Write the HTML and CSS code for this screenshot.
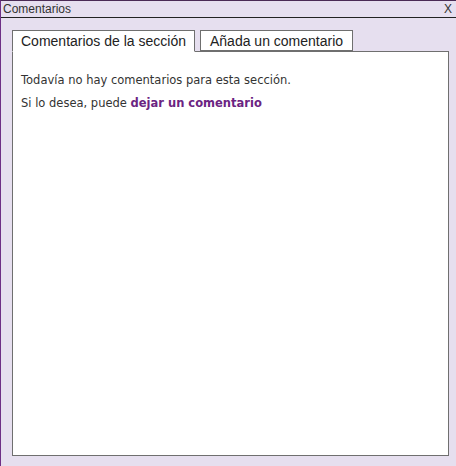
FILE: index.html
```html
<!DOCTYPE html>
<html>
<head>
	<title>Comentarios</title>
	<meta charset="utf-8">
	<link rel="stylesheet" href="styles.css">
</head>
<body>
	<div class="window">
		<div class="titlebar">
			<span class="title">Comentarios</span>
			<span class="close">X</span>
		</div>
		<div class="content">
			<div class="tabs">
				<div class="tab active">Comentarios de la sección</div>
				<div class="tab">Añada un comentario</div>
			</div>
			<div class="panel">
				<p>Todavía no hay comentarios para esta sección.</p>
				<p>Si lo desea, puede <a href="#">dejar un comentario</a></p>
			</div>
		</div>
	</div>
</body>
</html>
```

FILE: styles.css
```css
body{
	margin: 0;
}

.window{
	width: 455px;
	height: 465px;
	background-color: #e6dfef;
	border-left: 1px solid #6e2f86;
	border-top: 1px solid #4a2a55;
	font-family: "DejaVu Sans", Verdana, sans-serif;
}

.titlebar{
	height: 16px;
	display: flex;
	justify-content: space-between;
	align-items: center;
	padding: 0 4px 0 2px;
	border-bottom: 1px solid #222;
	font-family: "Liberation Sans", Tahoma, sans-serif;
	font-size: 12px;
	color: #333;
}

.content{
	padding: 12px 7px 0 11px;
}

.tabs{
	display: flex;
	gap: 5px;
	margin-bottom: -1px;
	position: relative;
}

.tab{
	height: 19px;
	padding: 0 9px 0 9px;
	line-height: 21px;
	background-color: #fff;
	border: 1px solid #6f6f6f;
	font-family: "Liberation Sans", Tahoma, sans-serif;
	font-size: 14px;
	color: #222;
}

.tab.active{
	padding: 0 8px;
	border-bottom-color: #fff;
	height: 20px;
}

.panel{
	height: 403px;
	background-color: #fff;
	border: 1px solid #6f6f6f;
	padding: 0 8px;
	font-size: 11.5px;
	color: #333;
}

.panel p{
	margin: 0;
	line-height: 23px;
}

.panel p:first-child{
	margin-top: 17px;
}

.panel a{
	color: #6b2482;
	font-weight: bold;
	text-decoration: none;
}
```
